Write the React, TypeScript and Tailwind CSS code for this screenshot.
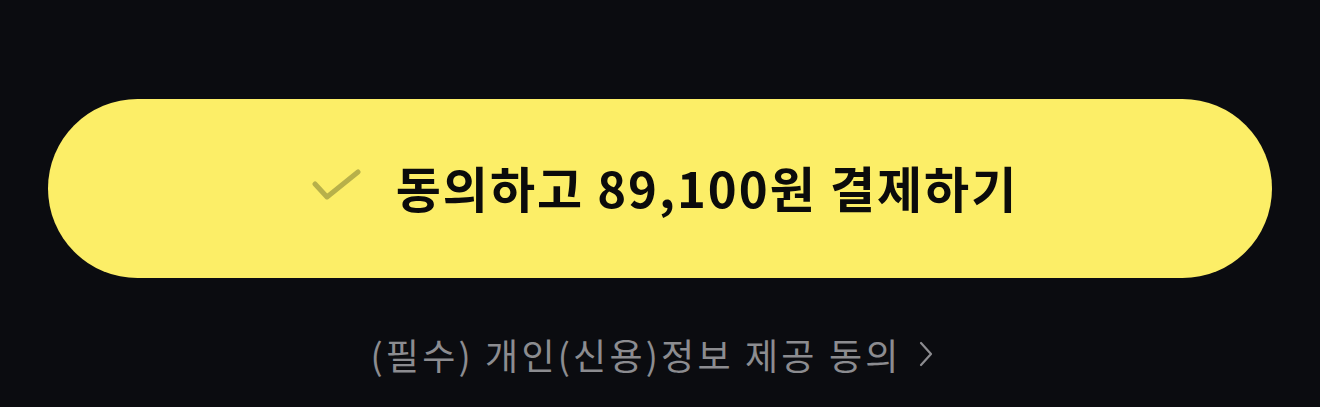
export default function App() {
  return (
    <div
      className="h-[407px] w-[1320px] bg-[#0b0c10] flex flex-col items-center pt-[99px] px-[48px]"
      style={{ fontFamily: '"Noto Sans CJK KR", "Noto Sans", sans-serif' }}
    >
      <button className="w-full h-[179px] rounded-full bg-[#fcee67] flex items-center justify-center pb-[5px]">
        <svg width="50" height="40" viewBox="0 0 50 40" className="ml-[10px] mr-[34px] mt-[4px]" fill="none">
          <path d="M3 16 L15 29 L46 4" stroke="#b7b04a" strokeWidth="5" strokeLinecap="round" strokeLinejoin="round" />
        </svg>
        <span className="text-[49px] font-bold text-[#0b0b0b] tracking-[2px] leading-none">
          동의하고 89,100원 결제하기
        </span>
      </button>
      <div className="mt-[58px] pr-[16px] flex items-center text-[36px] text-[#8c8c90] leading-none">
        <span className="tracking-[3.2px]">(필수) 개인(신용)정보 제공 동의</span>
        <svg width="16" height="28" viewBox="0 0 16 28" className="ml-[16px]" fill="none">
          <path d="M3 3 L13 14 L3 25" stroke="#8c8c90" strokeWidth="2.2" strokeLinecap="round" strokeLinejoin="round" />
        </svg>
      </div>
    </div>
  );
}
